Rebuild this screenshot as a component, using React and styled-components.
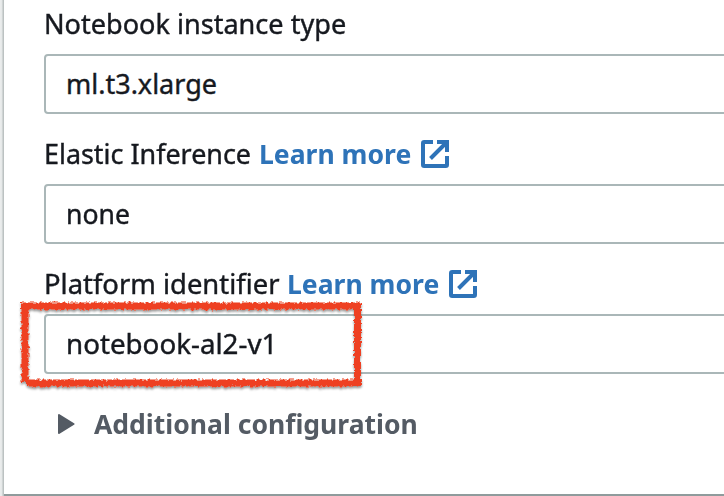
import React from "react";
import styled, { createGlobalStyle } from "styled-components";

const GlobalStyle = createGlobalStyle`
  * { box-sizing: border-box; }
  html, body { margin: 0; overflow: hidden; background: #eef0f0; }
`;

const Page = styled.div`
  width: 724px;
  height: 496px;
  padding-left: 4px;
  overflow: hidden;
  background: linear-gradient(90deg, #eceeee 0, #e4e7e7 2px, #bcc2c2 3px, #bcc2c2 4px);
  font-family: "Noto Sans", "Open Sans", sans-serif;
  font-size: 27px;
  color: #16191f;
`;

const Panel = styled.main`
  position: relative;
  height: 496px;
  padding-left: 40px;
  background: #fff;
  border-bottom: 2px solid #8f9b9c;
`;

const Field = styled.section`
  height: 130px;
`;

const Label = styled.div`
  display: flex;
  align-items: center;
  height: 54px;
  padding-bottom: 6px;
`;

const Text = styled.span`
  display: block;
  flex: none;
  width: ${(p) => p.$width}px;
  white-space: nowrap;
  line-height: 38px;
  transform: scaleX(${(p) => p.$scale || 1});
  transform-origin: 0 50%;
  -webkit-text-stroke: ${(p) => (p.$bold ? 0 : 0.4)}px currentColor;
`;

const Link = styled.a`
  display: flex;
  align-items: center;
  color: #2e73b8;
  font-weight: 700;
`;

const Input = styled.div`
  display: flex;
  align-items: center;
  width: 720px;
  height: 60px;
  padding-left: 20px;
  border: 2px solid #aab7b8;
  border-radius: 4px;
`;

const Expander = styled.div`
  display: flex;
  align-items: center;
  height: 68px;
  padding-left: 14px;
  color: #545b64;
  font-weight: 700;
`;

const Caret = styled.svg`
  width: 17px;
  height: 20px;
  margin-right: 19px;
`;

const IconSvg = styled.svg`
  width: 28px;
  height: 28px;
`;

const Markup = styled.svg`
  position: absolute;
  left: 8px;
  top: 292px;
  width: 360px;
  height: 104px;
  pointer-events: none;
`;

const ExternalIcon = () => (
  <IconSvg viewBox="0 0 28 28" fill="none" stroke="currentColor" strokeWidth="4">
    <path d="M12 2H3.2Q2 2 2 3.2V24.8Q2 26 3.2 26H24.8Q26 26 26 24.8V16" />
    <path d="M16 2H26V12M25 3L9.5 18.5" />
  </IconSvg>
);

const LearnMore = () => (
  <Link>
    <Text $width={162} $scale={0.983} $bold>Learn more</Text>
    <ExternalIcon />
  </Link>
);

export default function App() {
  return (
    <>
      <GlobalStyle />
      <Page>
        <Panel>
          <Field>
            <Label><Text $width={310} $scale={1.003}>Notebook instance type</Text></Label>
            <Input><Text $width={160}>ml.t3.xlarge</Text></Input>
          </Field>
          <Field>
            <Label><Text $width={215} $scale={0.996}>Elastic Inference</Text><LearnMore /></Label>
            <Input><Text $width={100} $scale={0.985}>none</Text></Input>
          </Field>
          <Field>
            <Label><Text $width={243} $scale={1.015}>Platform identifier</Text><LearnMore /></Label>
            <Input><Text $width={220} $scale={1.027}>notebook-al2-v1</Text></Input>
          </Field>
          <Expander>
            <Caret viewBox="0 0 17 20">
              <path d="M1 1L15.5 10L1 19Z" fill="#545b64" stroke="#545b64" strokeWidth="2" strokeLinejoin="round" />
            </Caret>
            <Text $width={340} $scale={0.982} $bold>Additional configuration</Text>
          </Expander>
          <Markup viewBox="12 292 360 104">
            <defs>
              <filter id="chalk" filterUnits="userSpaceOnUse" x="12" y="292" width="360" height="104">
                <feTurbulence type="fractalNoise" baseFrequency="0.35" numOctaves="2" seed="4" result="n" />
                <feDisplacementMap in="SourceGraphic" in2="n" scale="5" xChannelSelector="R" yChannelSelector="G" result="d" />
                <feDropShadow in="d" dx="0" dy="2" stdDeviation="1.3" floodColor="#000" floodOpacity="0.4" />
              </filter>
            </defs>
            <g filter="url(#chalk)" stroke="#ee4023" strokeWidth="7" fill="none">
              <path d="M21 306H361M25 303V382M27 383H361M357.5 303V386" />
            </g>
          </Markup>
        </Panel>
      </Page>
    </>
  );
}
